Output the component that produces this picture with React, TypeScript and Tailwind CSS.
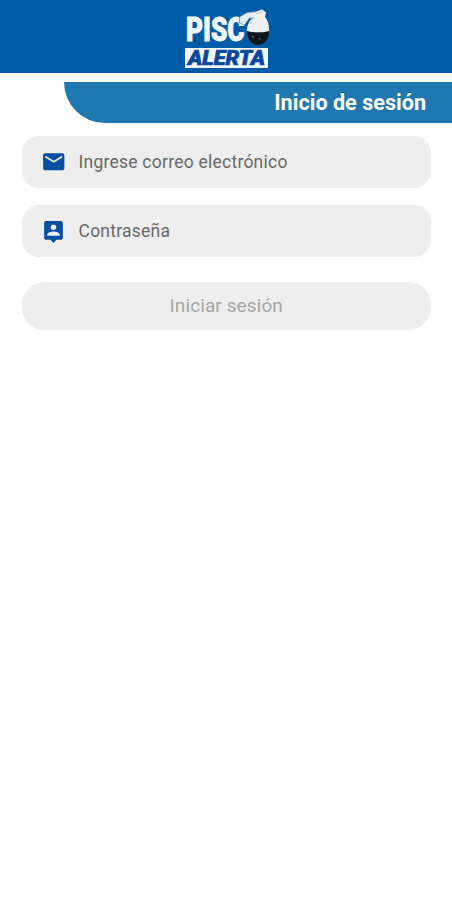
import React from "react";

function Logo() {
  return (
    <svg width="100" height="72" viewBox="176 0 100 72" role="img" aria-label="Pisco Alerta">
      <text x="186" y="41" fontSize="33" textLength="58.500" lengthAdjust="spacingAndGlyphs" fontFamily="Roboto, 'Liberation Sans', sans-serif" fontWeight="900" fill="#f4f7fa" stroke="#f4f7fa" strokeWidth="0.9">PISC</text>
      <path d="M239.500 17 L247 12.500 L257 11.500 L262 9.500 L266 13 L260 17 L249 18.500 L244.500 25 L239.500 23 Z" fill="#e6ebef" stroke="#4f80b3" strokeWidth="0.7" />
      <path d="M247 32.500 C246.500 26 249 20 254 17 L256 12 L262 9.500 L266 12.500 L265 17 C268.500 21 269.500 27 269 32.500 Z" fill="#eef1f3" />
      <path d="M256 13.500 L263 12 M254.500 17 Q251 20 250 24" stroke="#a9b8c6" strokeWidth="0.7" fill="none" />
      <path d="M247 31 Q258 34 269 31 C269.500 49.500 247 49.500 247 31 Z" fill="#11161d" />
      <path d="M252 36 l2 1.500 M259 38 l1 1.500" stroke="#8b98a5" strokeWidth="0.9" />
      <rect x="185" y="48" width="83" height="20" rx="0.5" fill="#f2f6fa" />
      <text x="188" y="65" fontSize="19.500" fontFamily="Roboto, 'Liberation Sans', sans-serif" fontWeight="900" fontStyle="italic" textLength="77" lengthAdjust="spacingAndGlyphs" fill="#0b489b" stroke="#0b489b" strokeWidth="0.7">ALERTA</text>
    </svg>
  );
}

function MailIcon() {
  return (
    <svg className="size-[25.5px] shrink-0" viewBox="0 0 24 24" fill="#0a4f9f">
      <path d="M20 4H4c-1.100 0-1.990.9-1.990 2L2 18c0 1.100.9 2 2 2h16c1.100 0 2-.9 2-2V6c0-1.100-.9-2-2-2zm0 4l-8 5-8-5V6l8 5 8-5v2z" />
    </svg>
  );
}

function PersonPinIcon() {
  return (
    <svg className="size-[25px] shrink-0" viewBox="0 0 24 24" fill="#0a4f9f">
      <path d="M19 2H5c-1.110 0-2 .9-2 2v14c0 1.100.89 2 2 2h4l3 3 3-3h4c1.100 0 2-.9 2-2V4c0-1.100-.9-2-2-2zm-7 3.300c1.490 0 2.700 1.210 2.700 2.700s-1.210 2.700-2.700 2.700S9.300 9.490 9.300 8s1.210-2.700 2.700-2.700zM18 16H6v-.9c0-2 4-3.100 6-3.100s6 1.100 6 3.100v.9z" />
    </svg>
  );
}

function Field({ icon, label }: { icon: React.ReactNode; label: string }) {
  return (
    <div className="flex h-[52px] items-center rounded-[17px] bg-[#eeeeee] pl-[19px]">
      <span className="flex w-[26px] justify-center">{icon}</span>
      <span className="ml-3 pt-px text-[17.5px] leading-none tracking-[0.24px] text-[#686868]">{label}</span>
    </div>
  );
}

export default function App() {
  return (
    <main className="min-h-screen bg-white font-[Roboto,'Liberation_Sans',sans-serif]">
      <header className="flex h-[72.5px] justify-center border-b border-[#0651a0] bg-[#005ca6]">
        <Logo />
      </header>
      <div className="mt-[9px] ml-[63.5px] flex h-[41px] items-center justify-end rounded-bl-[41px] bg-[#1f78b0] pr-[26px]">
        <h1 className="pt-0.5 text-[21.6px] leading-none font-bold text-white">Inicio de sesión</h1>
      </div>
      <form className="mt-[13.5px] mr-[21px] ml-[21.5px] flex flex-col">
        <Field icon={<MailIcon />} label="Ingrese correo electrónico" />
        <div className="mt-[17px]">
          <Field icon={<PersonPinIcon />} label="Contraseña" />
        </div>
        <button type="button" className="mt-[25px] h-12 rounded-[22px] bg-[#eeeeee] pt-px text-[19px] tracking-[0.1px] text-[#a6a6a6]">
          Iniciar sesión
        </button>
      </form>
    </main>
  );
}
